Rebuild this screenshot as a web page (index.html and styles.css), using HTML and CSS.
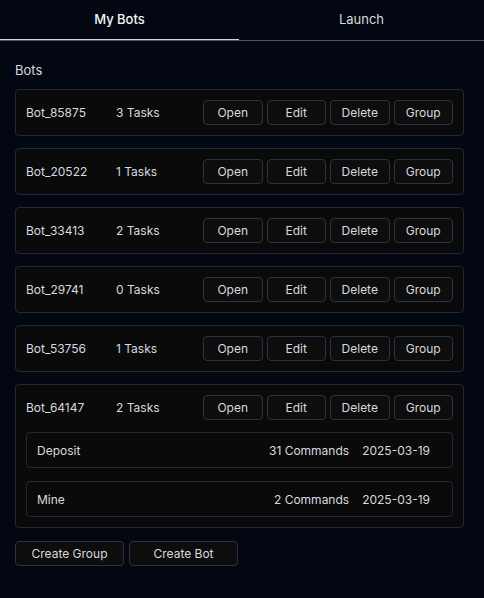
FILE: index.html
```html
<!DOCTYPE html>
<html lang="en">
<head>
    <meta charset="UTF-8">
    <meta name="viewport" content="width=device-width, initial-scale=1.0">
    <title>My Bots</title>
    <link rel="stylesheet" href="styles.css">
</head>
<body>

<div class="tabs">
    <div class="tab active">My Bots</div>
    <div class="tab">Launch</div>
</div>

<div class="panel">
    <h3 class="section-title">Bots</h3>

    <div class="bot-list">
        <div class="bot-card">
            <div class="bot-row">
                <span class="bot-name">Bot_85875</span>
                <span class="bot-tasks">3 Tasks</span>
                <div class="bot-actions">
                    <button class="btn">Open</button>
                    <button class="btn">Edit</button>
                    <button class="btn">Delete</button>
                    <button class="btn">Group</button>
                </div>
            </div>
        </div>

        <div class="bot-card">
            <div class="bot-row">
                <span class="bot-name">Bot_20522</span>
                <span class="bot-tasks">1 Tasks</span>
                <div class="bot-actions">
                    <button class="btn">Open</button>
                    <button class="btn">Edit</button>
                    <button class="btn">Delete</button>
                    <button class="btn">Group</button>
                </div>
            </div>
        </div>

        <div class="bot-card">
            <div class="bot-row">
                <span class="bot-name">Bot_33413</span>
                <span class="bot-tasks">2 Tasks</span>
                <div class="bot-actions">
                    <button class="btn">Open</button>
                    <button class="btn">Edit</button>
                    <button class="btn">Delete</button>
                    <button class="btn">Group</button>
                </div>
            </div>
        </div>

        <div class="bot-card">
            <div class="bot-row">
                <span class="bot-name">Bot_29741</span>
                <span class="bot-tasks">0 Tasks</span>
                <div class="bot-actions">
                    <button class="btn">Open</button>
                    <button class="btn">Edit</button>
                    <button class="btn">Delete</button>
                    <button class="btn">Group</button>
                </div>
            </div>
        </div>

        <div class="bot-card">
            <div class="bot-row">
                <span class="bot-name">Bot_53756</span>
                <span class="bot-tasks">1 Tasks</span>
                <div class="bot-actions">
                    <button class="btn">Open</button>
                    <button class="btn">Edit</button>
                    <button class="btn">Delete</button>
                    <button class="btn">Group</button>
                </div>
            </div>
        </div>

        <div class="bot-card">
            <div class="bot-row">
                <span class="bot-name">Bot_64147</span>
                <span class="bot-tasks">2 Tasks</span>
                <div class="bot-actions">
                    <button class="btn">Open</button>
                    <button class="btn">Edit</button>
                    <button class="btn">Delete</button>
                    <button class="btn">Group</button>
                </div>
            </div>
            <div class="task-list">
                <div class="task-row">
                    <span class="task-name">Deposit</span>
                    <span class="task-commands">31 Commands</span>
                    <span class="task-date">2025-03-19</span>
                </div>
                <div class="task-row">
                    <span class="task-name">Mine</span>
                    <span class="task-commands">2 Commands</span>
                    <span class="task-date">2025-03-19</span>
                </div>
            </div>
        </div>
    </div>

    <div class="footer-actions">
        <button class="btn btn-wide">Create Group</button>
        <button class="btn btn-wide">Create Bot</button>
    </div>
</div>

</body>
</html>
```

FILE: styles.css
```css
/* Global styles */
* {
    margin: 0;
    padding: 0;
    box-sizing: border-box;
}

body {
    background: #030712;
    color: #d6d9de;
    font-family: 'Inter', 'Noto Sans', sans-serif;
    font-size: 12px;
    height: 100vh;
}

/* Tabs */
.tabs {
    display: flex;
    height: 41px;
    border-bottom: 1px solid #4b5563;
}

.tab {
    flex: 1;
    display: flex;
    justify-content: center;
    align-items: center;
    padding-bottom: 2px;
    font-size: 13px;
    color: #d6d9de;
}

.tab.active {
    flex: 0 0 239px;
    color: #f3f4f6;
    font-weight: 500;
    border-bottom: 1px solid #d1d5db;
}

/* Panel */
.panel {
    padding: 21px 20px 0 15px;
}

.section-title {
    font-size: 13px;
    line-height: 16px;
    font-weight: 400;
    margin-bottom: 11px;
}

.bot-list {
    display: flex;
    flex-direction: column;
    gap: 12px;
}

.bot-card {
    background: #0a0a0a;
    border: 1px solid #1f2937;
    border-radius: 4px;
    padding: 10px;
    display: flex;
    flex-direction: column;
    gap: 12px;
}

.bot-row {
    display: flex;
    align-items: center;
    height: 25px;
}

.bot-name {
    width: 90px;
}

.bot-tasks {
    flex: 1;
}

.bot-actions {
    display: flex;
    gap: 4px;
}

.btn {
    width: 59.5px;
    height: 25px;
    background: #0d0d0d;
    border: 1px solid #2b3340;
    border-radius: 4px;
    color: #d6d9de;
    font-family: inherit;
    font-size: 12px;
    cursor: pointer;
}

.btn:hover {
    background: #1f2937;
}

/* Tasks inside an open bot */
.task-list {
    display: flex;
    flex-direction: column;
    gap: 13px;
}

.task-row {
    display: flex;
    align-items: center;
    height: 36px;
    padding: 0 22px 0 10px;
    border: 1px solid #1f2937;
    border-radius: 4px;
}

.task-name {
    flex: 1;
}

.task-date {
    margin-left: 13px;
}

.footer-actions {
    display: flex;
    gap: 5px;
    margin-top: 13px;
}

.btn-wide {
    width: 109px;
}
```
